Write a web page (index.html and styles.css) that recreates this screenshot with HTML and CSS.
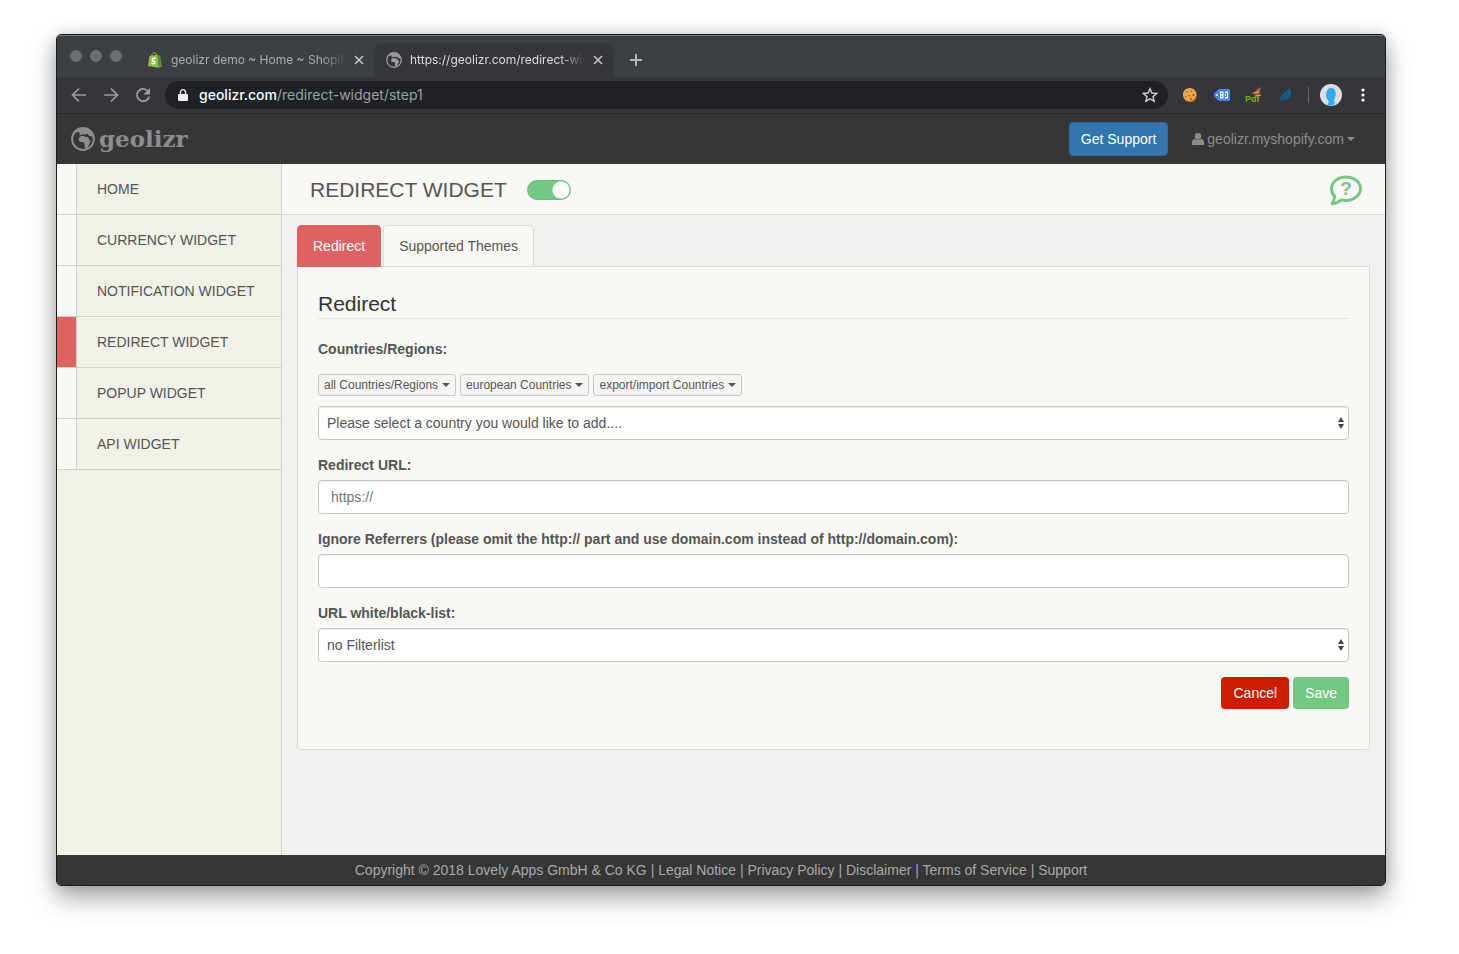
FILE: index.html
```html
<!DOCTYPE html>
<html lang="en">
<head>
    <meta charset="utf-8">
    <title>geolizr - Redirect Widget</title>
    <link rel="stylesheet" href="styles.css">
</head>
<body>
    <svg class="symbols" aria-hidden="true">
        <symbol id="globe" viewBox="0 0 24 24">
            <circle cx="12" cy="12" r="10.9" fill="none" stroke="currentColor" stroke-width="2"/>
            <path fill="currentColor" d="M4 5l4-3h9l4 4 1 5-2-2-2 0-1-2-2 0-1 1-2-1-2 1-2 0 1-2-2-1-2 1z"/>
            <path fill="currentColor" d="M8 11l2-2 3 0 2 1 2 0 1.500 3 1.500 1-1.500 2-.5 2-2 3-1.500 1-1-3 0-3-2-1-2.500 0L7.500 13z"/>
        </symbol>
    </svg>

    <div class="window">
        <div class="tab-strip">
            <div class="lights"><i></i><i></i><i></i></div>
            <div class="browser-tab">
                <svg class="favicon" viewBox="0 0 16 16">
                    <path d="M2.5 4l8-1.3 1.4 13.1L1 14z" fill="#95bf47"/>
                    <path d="M10.5 2.7l2.7 1.1L15 14.9l-3.4.9z" fill="#5e8e3e"/>
                    <path d="M4.5 4.5C5 1.5 7 .4 8 .8s1.5 1.5 1.5 3" fill="none" stroke="#95bf47"/>
                    <path d="M9 6.6C7 5.5 5.2 6.4 5.5 7.9c.3 1.3 2.4 1.4 2.3 2.8-.1 1.3-1.7 1.4-3.2.4" fill="none" stroke="#fff" stroke-width="1.7"/>
                </svg>
                <span class="tab-title">geolizr demo ~ Home ~ Shopify</span>
                <button class="icon-btn" aria-label="Close tab"><svg width="10" height="10" viewBox="0 0 10 10"><path d="M1 1l8 8M9 1L1 9" stroke="currentColor" stroke-width="1.6"/></svg></button>
            </div>
            <div class="browser-tab current">
                <svg class="favicon"><use href="#globe"/></svg>
                <span class="tab-title">https://geolizr.com/redirect-widget</span>
                <button class="icon-btn" aria-label="Close tab"><svg width="10" height="10" viewBox="0 0 10 10"><path d="M1 1l8 8M9 1L1 9" stroke="currentColor" stroke-width="1.6"/></svg></button>
            </div>
            <button class="icon-btn new-tab" aria-label="New tab"><svg width="12" height="12" viewBox="0 0 12 12"><path d="M6 0v12M0 6h12" stroke="currentColor" stroke-width="2"/></svg></button>
        </div>

        <div class="toolbar">
            <button class="icon-btn" aria-label="Back"><svg width="16" height="16" viewBox="0 0 16 16"><path d="M15 8H2M8 1.5L1.5 8 8 14.5" fill="none" stroke="currentColor" stroke-width="1.7"/></svg></button>
            <button class="icon-btn" aria-label="Forward"><svg width="16" height="16" viewBox="0 0 16 16"><path d="M1 8h13M8 1.5L14.5 8 8 14.5" fill="none" stroke="currentColor" stroke-width="1.7"/></svg></button>
            <button class="icon-btn" aria-label="Reload"><svg width="16" height="16" viewBox="0 0 16 16"><path d="M13.3 4.5A6.2 6.2 0 1 0 14.2 9.5" fill="none" stroke="currentColor" stroke-width="1.8"/><path d="M15 1v6.5H8.5z" fill="currentColor"/></svg></button>
            <div class="omnibox">
                <svg width="10" height="12" viewBox="0 0 10 12"><path d="M1 5h8a1 1 0 0 1 1 1v5a1 1 0 0 1-1 1H1a1 1 0 0 1-1-1V6a1 1 0 0 1 1-1z" fill="#eee"/><path d="M2.5 5.5V3.2a2.5 2.5 0 0 1 5 0v2.3" fill="none" stroke="#eee" stroke-width="1.3"/></svg>
                <span class="url"><b>geolizr.com</b>/redirect-widget/step1</span>
                <button class="icon-btn star" aria-label="Bookmark"><svg width="16" height="16" viewBox="0 0 16 16"><path d="M8 1.8l1.9 4.3 4.7.4-3.6 3.1 1.1 4.6L8 11.8l-4.1 2.4L5 9.6 1.4 6.5l4.7-.4z" fill="none" stroke="currentColor" stroke-width="1.5"/></svg></button>
            </div>
            <div class="extensions">
                <svg width="16" height="16" viewBox="0 0 16 16"><circle cx="8" cy="8.5" r="7" fill="#a85a18"/><circle cx="7.6" cy="7.6" r="6.7" fill="#eaa64c"/><g fill="#8a4d18"><circle cx="5" cy="5" r=".8"/><circle cx="9.5" cy="4.2" r=".7"/><circle cx="11.5" cy="8" r=".9"/><circle cx="7" cy="8.5" r=".8"/><circle cx="3.7" cy="9.8" r=".7"/><circle cx="9" cy="12" r=".9"/></g></svg>
                <svg width="16" height="16" viewBox="0 0 16 16"><path d="M5 2h10a1 1 0 0 1 1 1v10a1 1 0 0 1-1 1H5L0 9.5v-3z" fill="#4285f4"/><circle cx="3" cy="8" r="1" fill="#fff"/><path d="M6 4.5h3.5v7H6zM11 4.5h3v7h-3" fill="#fff"/><path d="M7 6.5h1.5M7 9.3h1.5M11 6.5h1.5v3H11" stroke="#4285f4" fill="none"/></svg>
                <svg class="wide-ext" width="16" height="16" viewBox="0 0 16 16"><text x="-1" y="15" class="ext-text">Pdf</text><path d="M5 6l4-1 2-3 5-2-2 2.500 0 4-3 2-2-1z" fill="#a9613a"/><path d="M8 6l5-1M10 9l5-1" stroke="#e7b478"/></svg>
                <svg width="16" height="16" viewBox="0 0 16 16"><path d="M3 15c-1-4-1-7 3-9 2-1 4-2 5-5 3 3 3 7 0 10-2 2-4 2-6 2z" fill="#175d8f"/><path d="M3 15c1-4 4-6 7-9" fill="none" stroke="#0f4470"/></svg>
            </div>
            <span class="divider"></span>
            <svg class="avatar" width="22" height="22" viewBox="0 0 22 22"><circle cx="11" cy="11" r="11" fill="#dedede"/><path d="M6 13c0-5 1-9 5-9s6 4 4 10l-1 2 1 4c-3 2-6 2-8 1l2-3z" fill="#31aaf0"/></svg>
            <button class="icon-btn" aria-label="Menu"><svg width="4" height="14" viewBox="0 0 4 14"><g fill="#fff"><circle cx="2" cy="2" r="1.6"/><circle cx="2" cy="7" r="1.6"/><circle cx="2" cy="12" r="1.6"/></g></svg></button>
        </div>

        <header class="navbar">
            <a class="brand" href="#"><svg width="24" height="24"><use href="#globe"/></svg>geolizr</a>
            <button class="btn btn-primary">Get Support</button>
            <a class="account" href="#"><svg width="12" height="12" viewBox="0 0 12 12"><circle cx="6" cy="3.2" r="3.2" fill="currentColor"/><path d="M0 12V9.5C0 7 1.5 6 3 6c1.5 1.2 4.5 1.2 6 0 1.5 0 3 1 3 3.5V12z" fill="currentColor"/></svg>geolizr.myshopify.com<span class="caret"></span></a>
        </header>

        <div class="page">
            <nav class="sidebar">
                <a href="#">HOME</a>
                <a href="#">CURRENCY WIDGET</a>
                <a href="#">NOTIFICATION WIDGET</a>
                <a class="active" href="#">REDIRECT WIDGET</a>
                <a href="#">POPUP WIDGET</a>
                <a href="#">API WIDGET</a>
            </nav>

            <main class="main">
                <div class="page-header">
                    <h1>REDIRECT WIDGET</h1>
                    <input class="switch" type="checkbox" aria-label="Redirect widget enabled" checked>
                    <a class="help" href="#" aria-label="Help"><svg width="34" height="32" viewBox="0 0 34 32"><path d="M5.5 22C3 20 2.5 17 2.5 14.5 2.5 8 9 3 17 3s14.5 5 14.500 11.5S25 26.500 17 26.500c-1.500 0-3-.2-4.500-.6-2.500 2-5.500 3.600-9.500 3.900 1.500-2.300 2.500-4.800 2.500-7.800z" fill="none" stroke="currentColor" stroke-width="3" stroke-linejoin="round"/><text x="17" y="21" text-anchor="middle">?</text></svg></a>
                </div>

                <div class="content">
                    <div class="tabs">
                        <a class="selected" href="#">Redirect</a>
                        <a href="#">Supported Themes</a>
                    </div>
                    <form class="panel">
                        <h2>Redirect</h2>

                        <label for="country">Countries/Regions:</label>
                        <div class="presets">
                            <button type="button" class="btn-xs">all Countries/Regions<span class="caret"></span></button>
                            <button type="button" class="btn-xs">european Countries<span class="caret"></span></button>
                            <button type="button" class="btn-xs">export/import Countries<span class="caret"></span></button>
                        </div>
                        <select id="country" class="form-control">
                            <option>Please select a country you would like to add....</option>
                        </select>

                        <div class="form-group">
                            <label for="url">Redirect URL:</label>
                            <input id="url" class="form-control" type="text" placeholder="https://">
                        </div>
                        <div class="form-group">
                            <label for="referrers">Ignore Referrers (please omit the http:// part and use domain.com instead of http://domain.com):</label>
                            <input id="referrers" class="form-control" type="text">
                        </div>
                        <div class="form-group">
                            <label for="filter">URL white/black-list:</label>
                            <select id="filter" class="form-control">
                                <option>no Filterlist</option>
                            </select>
                        </div>

                        <div class="actions">
                            <button type="button" class="btn btn-danger">Cancel</button>
                            <button type="button" class="btn btn-success">Save</button>
                        </div>
                    </form>
                </div>
            </main>
        </div>

        <footer class="footer">
            Copyright © 2018 Lovely Apps GmbH &amp; Co KG | <a href="#">Legal Notice</a> | <a href="#">Privacy Policy</a> | <a href="#">Disclaimer</a> | <a href="#">Terms of Service</a> | <a href="#">Support</a>
        </footer>
    </div>
</body>
</html>
```
FILE: styles.css
```css
* {
    box-sizing: border-box;
}
body {
    margin: 0;
    min-height: 100vh;
    padding: 34px 73px 68px 56px;
    display: flex;
    background: #fff;
    color: #555;
    font-family: "Liberation Sans", Arial, sans-serif;
    font-size: 14px;
    line-height: 20px;
}
a {
    color: inherit;
    text-decoration: none;
}
button, input, select {
    font: inherit;
}
svg {
    flex: none;
}
.symbols {
    position: absolute;
    width: 0;
    height: 0;
}
.window {
    flex: 1;
    min-width: 0;
    display: flex;
    flex-direction: column;
    border: 1px solid #1b1c1e;
    border-radius: 5px;
    overflow: hidden;
    box-shadow: 0 12px 26px rgba(0,0,0,0.35), 0 0 14px rgba(0,0,0,0.15);
}

/* Browser chrome */
.icon-btn {
    display: flex;
    padding: 0;
    border: none;
    background: none;
    color: #9b9ca0;
    cursor: pointer;
}
.tab-strip {
    display: flex;
    height: 42px;
    padding: 7px 0 0 13px;
    background: #3c4043;
    border-top: 1px solid #77797b;
    font-family: Inter, sans-serif;
    font-size: 12px;
}
.lights {
    display: flex;
    gap: 8px;
    padding-top: 7px;
    margin-right: 14px;
}
.lights i {
    width: 12px;
    height: 12px;
    border-radius: 50%;
    background: #6b6f72;
}
.browser-tab {
    display: flex;
    align-items: center;
    width: 238px;
    padding: 0 10px 0 11px;
    color: #a9acaf;
}
.browser-tab.current {
    width: 240px;
    padding: 0 11px 0 12px;
    border-radius: 8px 8px 0 0;
    background: #35363a;
    color: #dcdde0;
}
.browser-tab .icon-btn {
    color: #c3c5c8;
    margin-left: 8px;
}
.favicon {
    width: 16px;
    height: 16px;
    margin-right: 8px;
    color: #9a9b9d;
}
.tab-title {
    flex: 1;
    white-space: nowrap;
    overflow: hidden;
    -webkit-mask-image: linear-gradient(to right, #000 86%, transparent);
    mask-image: linear-gradient(to right, #000 86%, transparent);
}
.new-tab {
    align-items: center;
    margin-left: 16px;
    color: #b5b7ba;
}
.toolbar {
    display: flex;
    align-items: center;
    height: 37px;
    padding: 0 20px 0 14px;
    background: #35363a;
    border-bottom: 1px solid #27282a;
}
.toolbar > .icon-btn + .icon-btn {
    margin-left: 16px;
}
.omnibox {
    flex: 1;
    display: flex;
    align-items: center;
    height: 28px;
    margin: 0 14px;
    padding: 0 10px 0 13px;
    border-radius: 14px;
    background: #202124;
    color: #9aa0a6;
    font-family: Inter, sans-serif;
}
.url {
    margin-left: 11px;
}
.url b {
    color: #fff;
    font-weight: 500;
}
.star {
    margin-left: auto;
    color: #c6c8ca;
}
.extensions {
    display: flex;
    gap: 16px;
}
.wide-ext {
    overflow: visible;
}
.ext-text {
    font: bold 9px "Liberation Sans", sans-serif;
    fill: #76b900;
}
.divider {
    width: 1px;
    height: 16px;
    margin: 0 11px 0 14px;
    background: #6a6b6e;
}
.avatar {
    margin-right: 19px;
}

/* Site header */
.navbar {
    display: flex;
    align-items: center;
    height: 50px;
    padding: 0 30px 0 14px;
    background: #363636;
    color: #8d8d8d;
}
.brand {
    display: flex;
    align-items: center;
    gap: 4px;
    margin-right: auto;
    font-family: "DejaVu Serif", serif;
    font-size: 23px;
    font-weight: bold;
}
.account {
    display: flex;
    align-items: center;
    gap: 3px;
    margin-left: 24px;
}
.caret {
    display: inline-block;
    border: 4px solid transparent;
    border-top-color: currentColor;
    border-bottom: 0;
}
.btn {
    padding: 5px 11px;
    border: 1px solid transparent;
    border-radius: 4px;
    color: #fff;
    cursor: pointer;
}
.btn-primary {
    padding: 6px 11px;
    background: #3276b1;
    border-color: #2c699d;
}
.btn-danger { background: #cc1d00; }
.btn-success { background: #73c883; }

.page {
    flex: 1;
    display: flex;
    background: #f1f1ef;
}
.sidebar {
    width: 225px;
    border-right: 1px solid #d3d3cd;
    background: #f1f1e8;
}
.sidebar a {
    display: flex;
    border-bottom: 1px solid #d3d3cd;
    line-height: 50px;
}
.sidebar a::before {
    content: "";
    width: 19px;
    margin-right: 20px;
    border-right: 1px solid #d3d3cd;
    background: #f9f8f4;
}
.sidebar a.active::before {
    background: #dd6262;
}
.main {
    flex: 1;
    min-width: 0;
}
.page-header {
    display: flex;
    align-items: center;
    height: 51px;
    padding: 2px 22px 0 28px;
    border-bottom: 1px solid #dadada;
    background: #f9f8f4;
}
h1 {
    margin: 0 20px 0 0;
    font-size: 21px;
    font-weight: normal;
}
.switch {
    appearance: none;
    width: 44px;
    height: 20px;
    margin: 0;
    border: 1px solid #6bbd7b;
    border-radius: 10px;
    background: radial-gradient(circle at 33px 9px, #fff 8px, #73c883 9px);
}
.help {
    display: flex;
    margin-left: auto;
    color: #73c883;
}
.help text {
    font: bold 19px "Liberation Sans", sans-serif;
    fill: currentColor;
}

.content {
    padding: 10px 15px;
}
.tabs {
    display: flex;
    gap: 2px;
    margin-bottom: -1px;
}
.tabs a {
    padding: 10px 15px;
    border: 1px solid #dadada;
    border-radius: 4px 4px 0 0;
    background: #f9f8f4;
}
.tabs a.selected {
    border-color: #dd6262;
    background: #dd6262;
    color: #fff;
}
.panel {
    padding: 20px 20px 40px;
    border: 1px solid #dadada;
    border-radius: 0 0 4px 4px;
    background: #f9f8f4;
}
h2 {
    margin: 0 0 20px;
    padding: 5px 0 2px;
    border-bottom: 1px solid #e3e3e1;
    color: #333;
    font-size: 21px;
    font-weight: normal;
    line-height: 24px;
}
label {
    display: block;
    font-weight: bold;
}
.presets {
    display: flex;
    gap: 4px;
    margin: 15px 0 10px;
}
.btn-xs {
    display: flex;
    align-items: center;
    gap: 4px;
    padding: 1px 5px;
    border: 1px solid #c6c6c6;
    border-radius: 3px;
    background: #f5f5f5;
    color: #555;
    font-size: 12px;
    line-height: 18px;
}
.form-control {
    display: block;
    width: 100%;
    height: 34px;
    padding: 6px 12px;
    border: 1px solid #c6c6c6;
    border-radius: 4px;
    background: #fff;
    box-shadow: inset 0 1px 1px rgba(0,0,0,0.075);
    color: #555;
}
select.form-control {
    appearance: none;
    padding: 0 20px 0 8px;
    background: #fff url("data:image/svg+xml,%3Csvg xmlns='http://www.w3.org/2000/svg' width='6' height='12'%3E%3Cpath d='M3 0l3 5H0zM0 7h6l-3 5z' fill='%23444'/%3E%3C/svg%3E") right 4px center no-repeat;
}
.form-control::placeholder {
    color: #777;
}
.form-group {
    margin-top: 15px;
}
.form-group label {
    margin-bottom: 5px;
}
.actions {
    display: flex;
    justify-content: flex-end;
    gap: 4px;
    margin-top: 15px;
}
.footer {
    padding: 5px;
    background: #363636;
    color: #a9a9a9;
    text-align: center;
}
```
